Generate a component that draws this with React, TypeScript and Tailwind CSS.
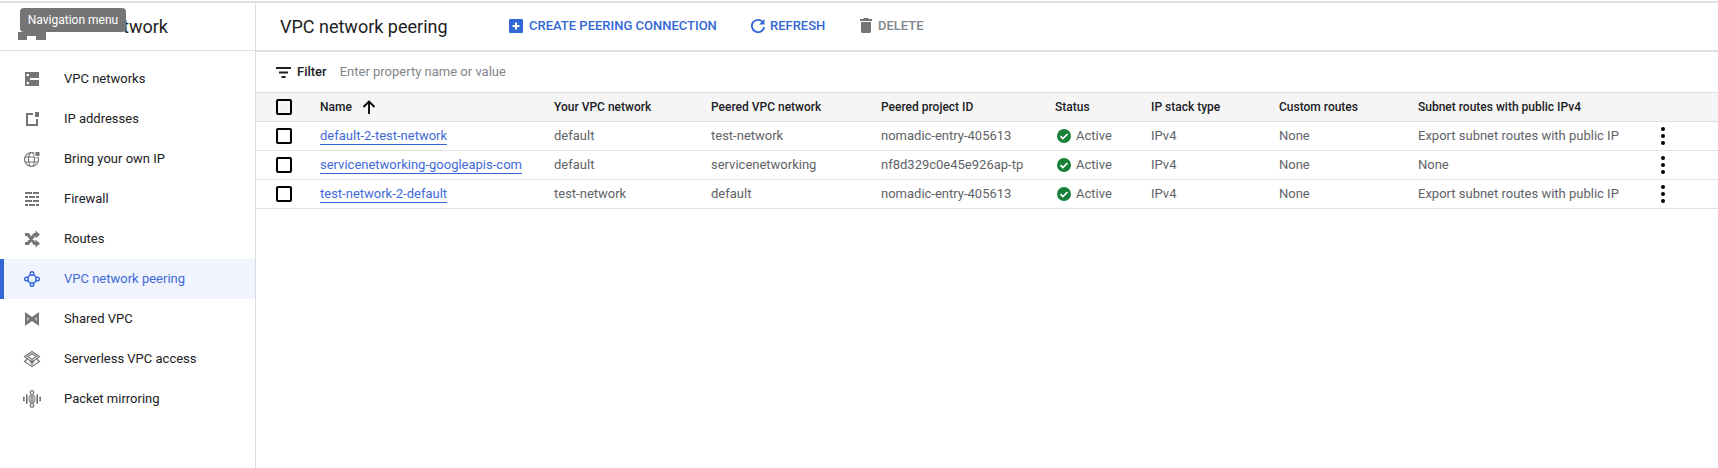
const navItems = [
  { label: "VPC networks", icon: "networks" },
  { label: "IP addresses", icon: "ip" },
  { label: "Bring your own IP", icon: "globe" },
  { label: "Firewall", icon: "firewall" },
  { label: "Routes", icon: "routes" },
  { label: "VPC network peering", icon: "peering", active: true },
  { label: "Shared VPC", icon: "shared" },
  { label: "Serverless VPC access", icon: "serverless" },
  { label: "Packet mirroring", icon: "mirroring" },
];

const columns = [
  "Your VPC network",
  "Peered VPC network",
  "Peered project ID",
  "Status",
  "IP stack type",
  "Custom routes",
  "Subnet routes with public IPv4",
];

const rows = [
  {
    name: "default-2-test-network",
    yours: "default",
    peered: "test-network",
    project: "nomadic-entry-405613",
    subnet: "Export subnet routes with public IP",
  },
  {
    name: "servicenetworking-googleapis-com",
    yours: "default",
    peered: "servicenetworking",
    project: "nf8d329c0e45e926ap-tp",
    subnet: "None",
  },
  {
    name: "test-network-2-default",
    yours: "test-network",
    peered: "default",
    project: "nomadic-entry-405613",
    subnet: "Export subnet routes with public IP",
  },
];

const NavIcon = ({ name }: { name: string }) => {
  const common = { width: 18, height: 18, viewBox: "0 0 18 18", fill: "none" };
  switch (name) {
    case "networks":
      return (
        <svg {...common}>
          <path fill="#757575" d="M2 2h14v14H2z" />
          <path fill="#fff" d="M7 8h9v2H7z" />
          <circle cx="4.800" cy="5" r="1.300" fill="#fff" />
          <circle cx="4.800" cy="13" r="1.300" fill="#fff" />
        </svg>
      );
    case "ip":
      return (
        <svg {...common}>
          <path stroke="#757575" strokeWidth="2" d="M10 4H4v11h10V9" />
          <path fill="#757575" d="M12 2h4v5h-4z" />
        </svg>
      );
    case "globe":
      return (
        <svg {...common}>
          <circle cx="8.500" cy="9.500" r="7" stroke="#757575" strokeWidth="1.200" />
          <ellipse cx="8.500" cy="9.500" rx="3" ry="7" stroke="#757575" strokeWidth="1.200" />
          <path stroke="#757575" strokeWidth="1.200" d="M2 7h13M2 12h13" />
          <path fill="#fff" d="M11.500 1h6v6h-6z" />
          <path fill="#757575" d="M12.500 2h4v4h-4z" />
        </svg>
      );
    case "firewall":
      return (
        <svg {...common}>
          <g fill="#757575">
            <path d="M2 2h7v2H2zM10 2h6v2h-6z" />
            <path d="M2 6h3v2H2zM6 6h6v2H6zM13 6h3v2h-3z" />
            <path d="M2 10h7v2H2zM10 10h6v2h-6z" />
            <path d="M2 14h3v2H2zM6 14h6v2H6zM13 14h3v2h-3z" />
          </g>
        </svg>
      );
    case "routes":
      return (
        <svg {...common}>
          <path stroke="#757575" strokeWidth="3" d="M2 4.500h3l6.500 9H14M2 13.500h3l6.500-9H14" />
          <path fill="#757575" d="M12.500 0.500l4.500 4-4.500 4zM12.500 9.500l4.500 4-4.500 4z" />
        </svg>
      );
    case "peering":
      return (
        <svg {...common}>
          <g stroke="#3367d6" strokeWidth="1.400">
            <path d="M7.600 4.600L4.400 7.600M10.400 4.600l3.200 3M7.600 13.400l-3.200-3M10.400 13.400l3.200-3" />
            <circle cx="9" cy="3.500" r="1.800" />
            <circle cx="9" cy="14.500" r="1.800" />
            <circle cx="3.500" cy="9" r="1.800" />
            <circle cx="14.500" cy="9" r="1.800" />
          </g>
        </svg>
      );
    case "shared":
      return (
        <svg {...common}>
          <path fill="#757575" fillRule="evenodd" d="M2 2l7 5 7-5v14l-7-5-7 5z" />
          <path fill="#fff" d="M4 7v4l2.500-2zM14 7l-2.500 2 2.500 2z" opacity="0.550" />
        </svg>
      );
    case "serverless":
      return (
        <svg {...common}>
          <g stroke="#757575" strokeWidth="1.200">
            <path d="M9 1.500L16.500 6.500 13.500 9l3 2.500L9 16.500 1.500 11.500 4.500 9l-3-2.500z" />
            <path d="M4.500 9L9 12l4.500-3M4.500 6.500L9 3.800l4.500 2.700L9 9.200z" />
            <path d="M9 9v6M7 12.500l2-2 2 2" />
          </g>
        </svg>
      );
    default:
      return (
        <svg {...common}>
          <g fill="#757575">
            <rect x="0" y="6.500" width="1.600" height="5" rx="0.800" />
            <rect x="3" y="4" width="1.600" height="10" rx="0.800" />
            <rect x="13.400" y="4" width="1.600" height="10" rx="0.800" />
            <rect x="16.400" y="6.500" width="1.600" height="5" rx="0.800" />
            <rect x="7.500" y="6" width="1.200" height="6" />
            <rect x="9.300" y="6" width="1.200" height="6" />
          </g>
          <circle cx="9" cy="2.500" r="1.800" stroke="#757575" strokeWidth="1.300" />
          <circle cx="9" cy="15.500" r="1.800" stroke="#757575" strokeWidth="1.300" />
          <rect x="6" y="5" width="6" height="8" rx="3" stroke="#757575" strokeWidth="1" />
        </svg>
      );
  }
};

const Checkbox = () => <div className="w-[16px] h-[16px] rounded-[2px] border-2 border-black" />;

const App = () => {
  return (
    <div className="relative w-[1718px] h-[468px] bg-white overflow-hidden font-['Roboto',sans-serif] text-[13px] text-[#202124]">
      <div className="h-[2px] bg-[#e0e0e0] mt-px" />
      <div className="flex h-[465px]">
        <aside className="w-[256px] border-r border-[#dadce0] shrink-0">
          <div className="h-[48px] border-b border-[#e0e0e0] flex items-center pl-[123px] text-[18px] text-[#202124]">
            twork
          </div>
          <nav className="pt-[8px]">
            {navItems.map((item) => (
              <div
                key={item.label}
                className={
                  item.active
                    ? "h-[40px] flex items-center bg-[#eff4ff] border-l-4 border-[#3367d6] pl-[19px] text-[#3f6ad8]"
                    : "h-[40px] flex items-center pl-[23px]"
                }
              >
                <NavIcon name={item.icon} />
                <span className="ml-[23px]">{item.label}</span>
              </div>
            ))}
          </nav>
        </aside>

        <main className="flex-1 min-w-0">
          <div className="h-[49px] border-b-2 border-[#e0e0e0] flex items-center pl-[24px]">
            <h1 className="text-[18px] font-normal w-[229px] shrink-0">VPC network peering</h1>
            <button className="flex items-center text-[#3367d6] font-medium text-[13px] w-[241px] shrink-0 whitespace-nowrap mb-[2px]">
              <svg width="14" height="14" viewBox="0 0 14 14" className="mr-[6px]">
                <rect width="14" height="14" rx="1" fill="#3367d6" />
                <path d="M7 3.500v7M3.500 7h7" stroke="#fff" strokeWidth="2" />
              </svg>
              CREATE PEERING CONNECTION
            </button>
            <button className="flex items-center text-[#3367d6] font-medium text-[13px] w-[110px] shrink-0 mb-[2px]">
              <svg width="16" height="16" viewBox="0 0 16 16" className="mr-[4px]">
                <path d="M13 4.200A6.200 6.200 0 1 0 14.200 9" stroke="#3367d6" strokeWidth="1.800" fill="none" />
                <path d="M14.500 1v5.500H9z" fill="#3367d6" />
              </svg>
              REFRESH
            </button>
            <button className="flex items-center text-[#80868b] font-medium text-[13px] mb-[2px]">
              <svg width="12" height="15" viewBox="0 0 12 15" className="mr-[6px]">
                <path d="M4 0h4l1 1h3v2H0V1h3zM1 4h10v9.500a1.500 1.500 0 0 1-1.500 1.500h-7A1.500 1.500 0 0 1 1 13.500z" fill="#757575" />
              </svg>
              DELETE
            </button>
          </div>

          <div className="h-[41px] flex items-center pl-[20px] border-b border-[#e0e0e0]">
            <svg width="15" height="11" viewBox="0 0 15 11" className="mr-[6px]">
              <path d="M0 0h15v2H0zM3 4.500h9v2H3zM5.500 9h4v2h-4z" fill="#202124" />
            </svg>
            <span className="text-[13px] font-medium mr-[13px]">Filter</span>
            <span className="text-[#80868b] text-[13px]">Enter property name or value</span>
          </div>

          <table className="table-fixed w-[1462px] border-collapse">
            <colgroup>
              <col className="w-[64px]" />
              <col className="w-[234px]" />
              <col className="w-[157px]" />
              <col className="w-[170px]" />
              <col className="w-[174px]" />
              <col className="w-[96px]" />
              <col className="w-[128px]" />
              <col className="w-[139px]" />
              <col className="w-[244px]" />
              <col />
            </colgroup>
            <thead>
              <tr className="h-[28px] bg-[#f5f5f5] border-b border-[#e0e0e0] text-[12px] font-medium text-left">
                <th className="pl-[20px] font-medium">
                  <Checkbox />
                </th>
                <th className="font-medium">
                  <span className="inline-flex items-center align-middle">
                    Name
                    <svg width="16" height="16" viewBox="0 0 16 16" className="ml-[9px]">
                      <path d="M8 15V2.500M2.500 8L8 2.500 13.500 8" stroke="#000" strokeWidth="1.800" fill="none" />
                    </svg>
                  </span>
                </th>
                {columns.map((col) => (
                  <th key={col} className="font-medium">
                    {col}
                  </th>
                ))}
                <th />
              </tr>
            </thead>
            <tbody>
              {rows.map((row) => (
                <tr key={row.name} className="h-[29px] border-b border-[#e0e0e0] text-[#5f6368]">
                  <td className="pl-[20px]">
                    <Checkbox />
                  </td>
                  <td>
                    <span className="text-[#3f6ad8] border-b border-[#3367d6] pb-px">{row.name}</span>
                  </td>
                  <td>{row.yours}</td>
                  <td>{row.peered}</td>
                  <td>{row.project}</td>
                  <td>
                    <div className="flex items-center pl-[2px]">
                      <svg width="14" height="14" viewBox="0 0 14 14" className="mr-[5px]">
                        <circle cx="7" cy="7" r="7" fill="#188038" />
                        <path d="M3.500 7.200l2.400 2.400 4.600-4.600" stroke="#fff" strokeWidth="1.700" fill="none" />
                      </svg>
                      Active
                    </div>
                  </td>
                  <td>IPv4</td>
                  <td>None</td>
                  <td className="whitespace-nowrap">{row.subnet}</td>
                  <td>
                    <div className="flex flex-col items-center gap-[3px] w-[4px] ml-[-1px]">
                      <span className="w-[4px] h-[4px] rounded-full bg-black" />
                      <span className="w-[4px] h-[4px] rounded-full bg-black" />
                      <span className="w-[4px] h-[4px] rounded-full bg-black" />
                    </div>
                  </td>
                </tr>
              ))}
            </tbody>
          </table>
        </main>
      </div>

      {/* tooltip sits over the product title and menu icon */}
      <div className="absolute left-[18px] top-[32px] w-[28px] h-[8px] bg-[#757575]">
        <div className="absolute left-[9px] top-[4px] w-[9px] h-[4px] bg-white" />
      </div>
      <div className="absolute left-[20px] top-[8px] w-[106px] h-[24px] rounded-[4px] bg-[#757575] text-white text-[12px] flex items-center justify-center">
        Navigation menu
      </div>
    </div>
  );
};

export default App;
